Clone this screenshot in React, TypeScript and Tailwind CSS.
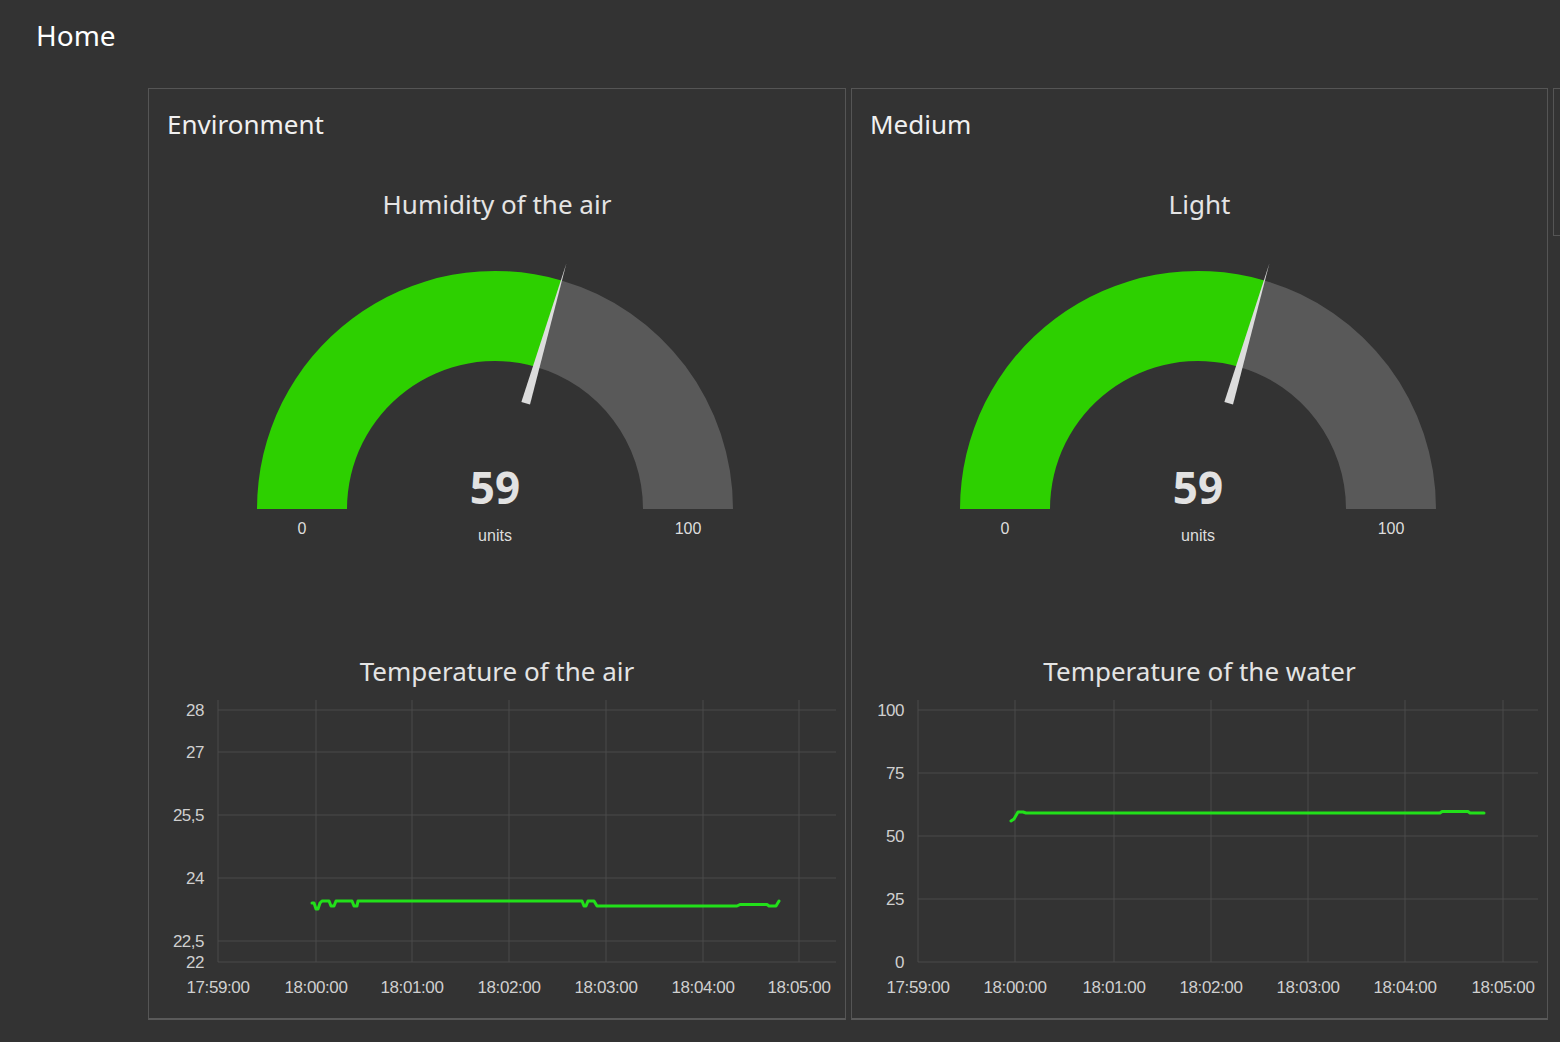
import React from "react";

type Pt = [number, number];

function Gauge({ title }: { title: string }) {
  const W = 696;
  const H = 330;
  const cx = 346;
  const cy = 278;
  const R = 238;
  const r = 148;
  const v = 0.59;
  const ang = Math.PI - v * Math.PI;
  const px = (rad: number, a: number) => [cx + rad * Math.cos(a), cy - rad * Math.sin(a)];
  const [ox, oy] = px(R, ang);
  const [ix, iy] = px(r, ang);
  const green = `M ${cx - R} ${cy} A ${R} ${R} 0 0 1 ${ox} ${oy} L ${ix} ${iy} A ${r} ${r} 0 0 0 ${cx - r} ${cy} Z`;
  const grey = `M ${ox} ${oy} A ${R} ${R} 0 0 1 ${cx + R} ${cy} L ${cx + r} ${cy} A ${r} ${r} 0 0 0 ${ix} ${iy} Z`;
  const d = [Math.cos(ang), -Math.sin(ang)];
  const n = [-d[1], d[0]];
  const b = 110;
  const t = 256;
  const needle = [
    [cx + b * d[0] + 4.5 * n[0], cy + b * d[1] + 4.5 * n[1]],
    [cx + b * d[0] - 4.5 * n[0], cy + b * d[1] - 4.5 * n[1]],
    [cx + t * d[0], cy + t * d[1]],
  ]
    .map((p) => p.join(","))
    .join(" ");
  return (
    <div className="flex flex-col items-center">
      <div className="mt-[46px] text-[26px] leading-[34px] text-[#e4e4e4]">{title}</div>
      <svg width={W} height={H} className="mt-[10px] block">
        <path d={green} fill="#2dd000" />
        <path d={grey} fill="#595959" />
        <polygon points={needle} fill="#dcdcdc" />
        <text x={cx} y={cy - 5} textAnchor="middle" fontSize="44" fontWeight="700" fill="#e2e2e2" className="font-['Noto_Sans',sans-serif]">
          59
        </text>
        <text x={cx} y={cy + 32} textAnchor="middle" fontSize="16" fill="#dddddd" className="font-['Liberation_Sans',sans-serif]">
          units
        </text>
        <text x={153} y={cy + 25} textAnchor="middle" fontSize="16" fill="#dddddd" className="font-['Liberation_Sans',sans-serif]">
          0
        </text>
        <text x={539} y={cy + 25} textAnchor="middle" fontSize="16" fill="#dddddd" className="font-['Liberation_Sans',sans-serif]">
          100
        </text>
      </svg>
    </div>
  );
}

function Chart({
  title,
  x0,
  x1,
  ys,
  xs,
  line,
}: {
  title: string;
  x0: number;
  x1: number;
  ys: { label: string; y: number }[];
  xs: number[];
  line: Pt[];
}) {
  const labels = ["17:59:00", "18:00:00", "18:01:00", "18:02:00", "18:03:00", "18:04:00", "18:05:00"];
  const yTop = 10;
  const yBot = 272;
  return (
    <div className="flex flex-col items-center">
      <div className="mt-[93px] text-[26px] leading-[34px] text-[#e4e4e4]">{title}</div>
      <svg width={696} height={320} className="mt-[2px] block font-['Liberation_Sans',sans-serif]">
        {ys.map((g) => (
          <line key={"h" + g.label} x1={x0} x2={x1} y1={g.y} y2={g.y} stroke="#4a4a4a" strokeWidth="1" />
        ))}
        {xs.map((x, i) => (
          <line key={"v" + i} x1={x} x2={x} y1={yTop} y2={yBot} stroke="#4a4a4a" strokeWidth="1" />
        ))}
        {ys.map((g) => (
          <text key={"t" + g.label} x={x0 - 14} y={g.y + 6} textAnchor="end" fontSize="17" fill="#cfcfcf" letterSpacing="-0.5">
            {g.label}
          </text>
        ))}
        {xs.map((x, i) => (
          <text key={"x" + i} x={x} y={303} textAnchor="middle" fontSize="17" fill="#cfcfcf" letterSpacing="-0.4">
            {labels[i]}
          </text>
        ))}
        <polyline
          points={line.map((p) => p.join(",")).join(" ")}
          fill="none"
          stroke="#22e01a"
          strokeWidth="3"
          strokeLinejoin="round"
          strokeLinecap="round"
        />
      </svg>
    </div>
  );
}

export default function App() {
  const L1 = 149;
  const L2 = 852;
  const T = 690;
  const c1Line: Pt[] = (
    [
      [312, 903],
      [314, 903],
      [316, 909],
      [318, 909],
      [320, 903],
      [322, 901],
      [329, 901],
      [331, 906],
      [334, 906],
      [336, 901],
      [352, 901],
      [354, 906],
      [357, 906],
      [358, 901],
      [582, 901],
      [584, 906],
      [586, 906],
      [588, 901],
      [594, 901],
      [597, 906],
      [737, 906],
      [740, 904.5],
      [767, 904.5],
      [769, 906],
      [776, 906],
      [779, 901],
    ] as Pt[]
  ).map(([x, y]) => [x - L1, y - T] as Pt);
  const c2Line: Pt[] = (
    [
      [1011, 821],
      [1014, 819],
      [1018, 812],
      [1023, 812],
      [1026, 813],
      [1440, 813],
      [1442, 811.5],
      [1468, 811.5],
      [1470, 813],
      [1484, 813],
    ] as Pt[]
  ).map(([x, y]) => [x - L2, y - T] as Pt);

  const ys1 = [
    { label: "28", y: 710 },
    { label: "27", y: 752 },
    { label: "25,5", y: 815 },
    { label: "24", y: 878 },
    { label: "22,5", y: 941 },
    { label: "22", y: 962 },
  ].map((g) => ({ ...g, y: g.y - T }));
  const ys2 = [
    { label: "100", y: 710 },
    { label: "75", y: 773 },
    { label: "50", y: 836 },
    { label: "25", y: 899 },
    { label: "0", y: 962 },
  ].map((g) => ({ ...g, y: g.y - T }));
  const xs1 = [218, 316, 412, 509, 606, 703, 799].map((x) => x - L1);
  const xs2 = [918, 1015, 1114, 1211, 1308, 1405, 1503].map((x) => x - L2);

  return (
    <div className="flex h-[1042px] w-[1560px] flex-col overflow-hidden bg-[#333333] font-['Noto_Sans','Open_Sans',sans-serif]">
      <div className="h-[88px] pl-[36px] pt-[15px] text-[28px] leading-[40px] text-white">Home</div>
      <div className="flex items-start gap-[5px] pl-[148px]">
        <div className="h-[932px] w-[698px] shrink-0 border border-b-2 border-[#555555] border-b-[#5a5a5a]">
          <div className="pl-[18px] pt-[18px] text-[26px] leading-[34px] text-[#f0f0f0]">Environment</div>
          <Gauge title="Humidity of the air" />
          <Chart title="Temperature of the air" x0={218 - L1} x1={836 - L1} ys={ys1} xs={xs1} line={c1Line} />
        </div>
        <div className="h-[932px] w-[697px] shrink-0 border border-b-2 border-[#555555] border-b-[#5a5a5a]">
          <div className="pl-[18px] pt-[18px] text-[26px] leading-[34px] text-[#f0f0f0]">Medium</div>
          <Gauge title="Light" />
          <Chart title="Temperature of the water" x0={918 - L2} x1={1538 - L2} ys={ys2} xs={xs2} line={c2Line} />
        </div>
        <div className="h-[148px] w-[200px] shrink-0 border border-[#555555]" />
      </div>
    </div>
  );
}
